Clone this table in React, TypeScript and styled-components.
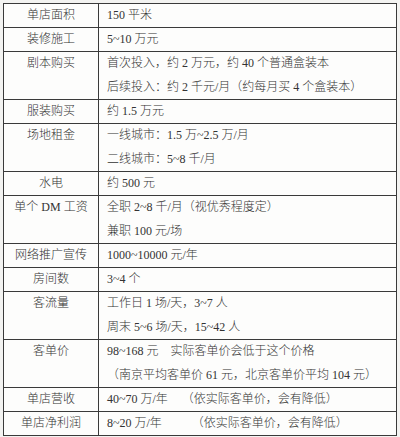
import styled, { createGlobalStyle } from 'styled-components';

type Row = {
  label: string;
  lines: { text: string; note?: string; gap?: number }[];
};

const rows: Row[] = [
  { label: '单店面积', lines: [{ text: '150 平米' }] },
  { label: '装修施工', lines: [{ text: '5~10 万元' }] },
  {
    label: '剧本购买',
    lines: [
      { text: '首次投入，约 2 万元，约 40 个普通盒装本' },
      { text: '后续投入：约 2 千元/月（约每月买 4 个盒装本）' },
    ],
  },
  { label: '服装购买', lines: [{ text: '约 1.5 万元' }] },
  {
    label: '场地租金',
    lines: [{ text: '一线城市：1.5 万~2.5 万/月' }, { text: '二线城市：5~8 千/月' }],
  },
  { label: '水电', lines: [{ text: '约 500 元' }] },
  {
    label: '单个 DM 工资',
    lines: [{ text: '全职 2~8 千/月（视优秀程度定）' }, { text: '兼职 100 元/场' }],
  },
  { label: '网络推广宣传', lines: [{ text: '1000~10000 元/年' }] },
  { label: '房间数', lines: [{ text: '3~4 个' }] },
  {
    label: '客流量',
    lines: [{ text: '工作日 1 场/天，3~7 人' }, { text: '周末 5~6 场/天，15~42 人' }],
  },
  {
    label: '客单价',
    lines: [
      { text: '98~168 元', note: '实际客单价会低于这个价格', gap: 12 },
      { text: '（南京平均客单价 61 元，北京客单价平均 104 元）' },
    ],
  },
  {
    label: '单店营收',
    lines: [{ text: '40~70 万/年', note: '（依实际客单价，会有降低）', gap: 14 }],
  },
  {
    label: '单店净利润',
    lines: [{ text: '8~20 万/年', note: '（依实际客单价，会有降低）', gap: 30 }],
  },
];

const GlobalStyle = createGlobalStyle`
  html, body {
    margin: 0;
    background: #f3f3f1;
  }
  body {
    padding: 3px;
    font-family: "Liberation Serif", "Noto Sans CJK SC", serif;
  }
`;

const Table = styled.table`
  width: 394px;
  table-layout: fixed;
  border-collapse: collapse;
  background: #fdfdfc;
  font-size: 12px;
  font-weight: 300;
  color: #333;
`;

const LabelCell = styled.td`
  width: 94px;
  border: 1px solid #3a3a3a;
  padding: 0;
  text-align: center;
  vertical-align: top;
  line-height: 23px;
`;

const ValueCell = styled.td`
  border: 1px solid #3a3a3a;
  padding: 0 0 0 8px;
  vertical-align: top;
`;

const Line = styled.div<{ $tall: boolean }>`
  height: ${(p) => (p.$tall ? '23.5px' : '23px')};
  line-height: ${(p) => (p.$tall ? '23.5px' : '23px')};
  white-space: nowrap;
`;

const Note = styled.span<{ $gap: number }>`
  margin-left: ${(p) => p.$gap}px;
`;

export default function App() {
  return (
    <>
      <GlobalStyle />
      <Table>
        <tbody>
          {rows.map((row) => (
            <tr key={row.label}>
              <LabelCell>{row.label}</LabelCell>
              <ValueCell>
                {row.lines.map((line, i) => (
                  <Line key={i} $tall={row.lines.length > 1}>
                    {line.text}
                    {line.note && <Note $gap={line.gap ?? 0}>{line.note}</Note>}
                  </Line>
                ))}
              </ValueCell>
            </tr>
          ))}
        </tbody>
      </Table>
    </>
  );
}
